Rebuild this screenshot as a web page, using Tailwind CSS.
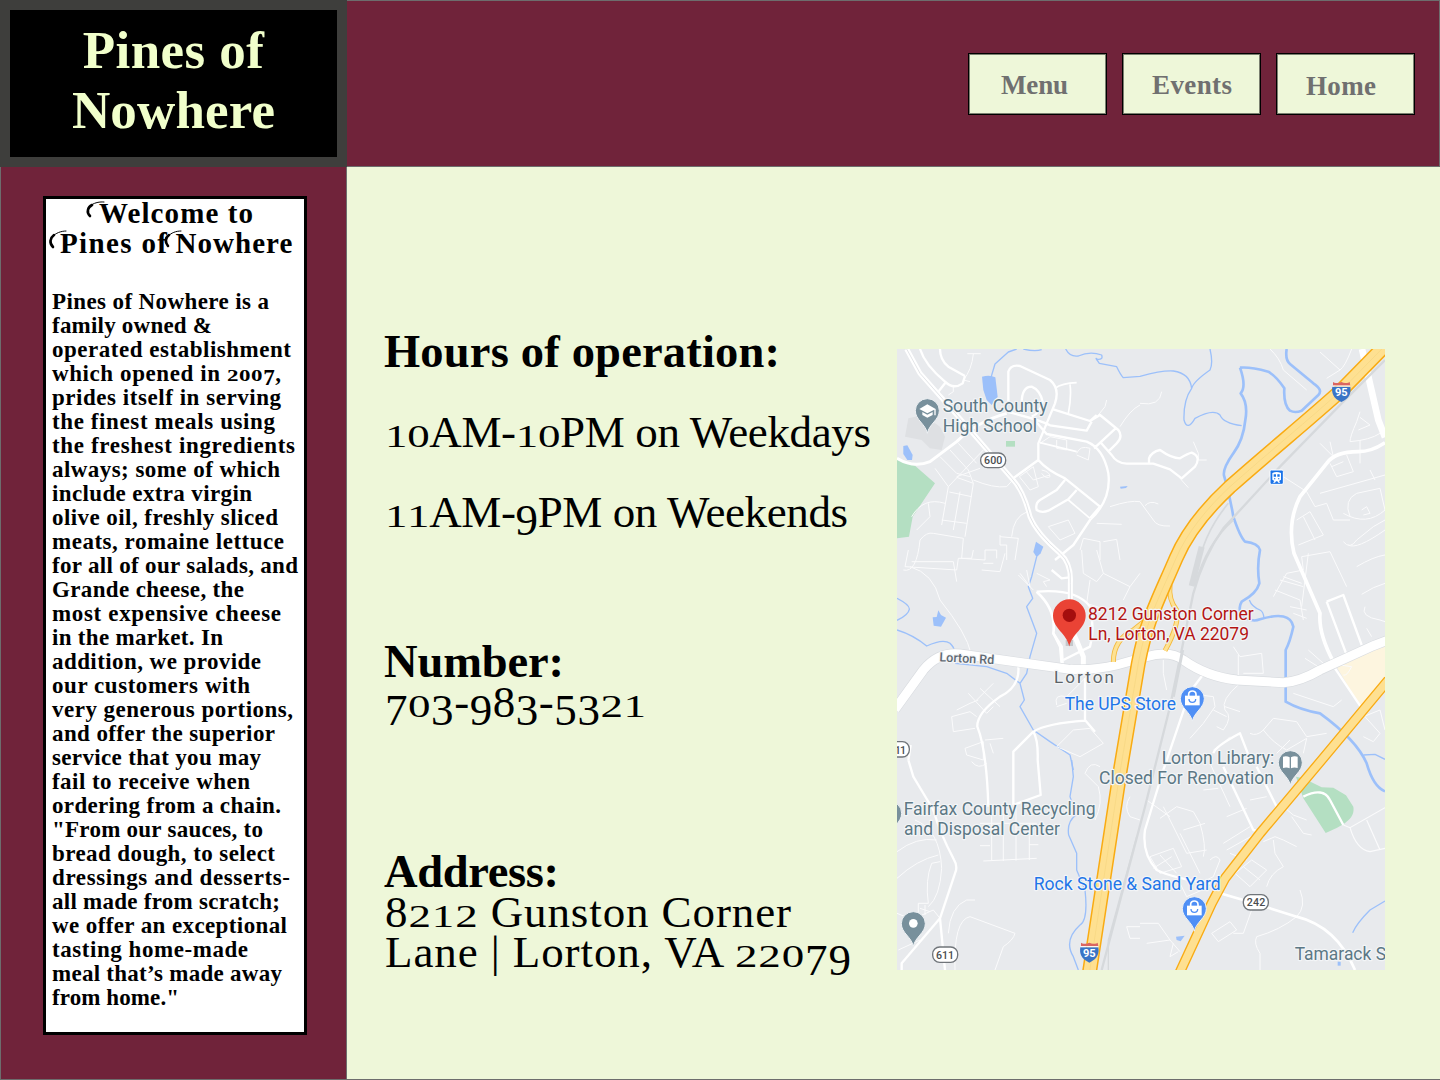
<!DOCTYPE html>
<html lang="en">
<head>
<meta charset="utf-8">
<title>Pines of Nowhere</title>
<script src="https://cdn.jsdelivr.net/npm/@tailwindcss/browser@4"></script>
</head>
<body class="w-[1440px] h-[1080px] overflow-hidden bg-[#eef7d9] font-['Liberation_Serif',serif] text-black flex flex-col">
<header class="flex h-[167px] shrink-0">
  <div class="w-[347px] h-[167px] shrink-0 border-10 border-[#3e3e3c] bg-black text-[#f1ffcb] text-[53px] leading-[60px] font-bold pt-[10px] text-center">
    <h1><span data-w="181">Pines of</span><br><span data-w="203">Nowhere</span></h1>
  </div>
  <nav class="flex-1 border border-l-0 border-[#6d6d6d] bg-[#70233a] flex justify-end gap-[15px] pt-[52px] pr-6 text-[27px] leading-[30px] font-bold text-[#707070]">
    <a class="w-[139px] h-[62px] border border-black bg-[#eef7d9] pl-8 pt-4 shadow-[inset_0_0_0_1px_#7b8070]"><span data-w="67">Menu</span></a>
    <a class="w-[139px] h-[62px] border border-black bg-[#eef7d9] pl-[29px] pt-4 shadow-[inset_0_0_0_1px_#7b8070]"><span data-w="80">Events</span></a>
    <a class="w-[139px] h-[62px] border border-black bg-[#eef7d9] pl-[29px] pt-[17px] shadow-[inset_0_0_0_1px_#7b8070]"><span data-w="70">Home</span></a>
  </nav>
</header>
<div class="flex flex-1">
  <aside class="w-[347px] shrink-0 border border-t-0 border-[#6d6d6d] bg-[#70233a] pl-[42px] pt-[28.5px]">
    <section class="w-[264px] h-[839px] border-3 border-black bg-white">
      <h2 class="relative h-[92px] text-[29px] leading-[30px] font-bold">
        <svg class="absolute left-0 top-0 w-[258px] h-[60px]" viewBox="46 199 258 60" fill="none" stroke="#000" stroke-linecap="round">
          <g stroke-width="1"><path d="M90 217C84 210 92 202 104 203"/><path d="M53 248C46 241 55 232 66 232"/><path d="M168 247C163 240 170 232 181 232"/></g>
          <g stroke-width="2.6"><path d="M90 217C86 213 88 208 92 206"/><path d="M53 248C49 244 50 239 54 236"/><path d="M168 247C165 243 165 239 169 236"/></g>
        </svg>
        <div class="-mt-px pl-[53px]"><span data-w="154">Welcome to</span></div>
        <div class="pl-[14px] flex"><span data-w="107">Pines of</span><span class="ml-[7px]" data-w="117">Nowhere</span></div>
      </h2>
      <div id="story" class="pl-[6px] text-[23px] leading-6 font-bold"></div>
    </section>
  </aside>
  <main class="flex-1 flex border-b border-[#6d6d6d]">
    <div class="w-[550px] shrink-0 pl-[38px] pt-[165px] text-[45px] leading-[40px]">
      <section class="h-[310px] flex flex-col gap-10">
        <h3 class="-ml-px text-[46.5px] font-bold"><span data-w="396">Hours of operation:</span></h3>
        <p><span data-old data-w="486">10AM-10PM on Weekdays</span></p>
        <p><span data-old data-w="463">11AM-9PM on Weekends</span></p>
      </section>
      <section class="h-[210px]">
        <h3 class="-ml-px text-[46.5px] font-bold"><span data-w="180">Number:</span></h3>
        <p><span data-old data-w="261">703-983-5321</span></p>
      </section>
      <section>
        <h3 class="-ml-px text-[46.5px] font-bold"><span data-w="175">Address:</span></h3>
        <p><span data-old data-w="406">8212 Gunston Corner</span></p>
        <p><span data-old data-w="466">Lane | Lorton, VA 22079</span></p>
      </section>
    </div>
    <svg class="w-[488px] h-[621px] mt-[182px] shrink-0" viewBox="21 27 1464 1863" font-family="Roboto, sans-serif">
      <defs>
        <path id="pin" d="M0 68C-5 40-36 28-36 0A36 36 0 0 1 36 0C36 28 5 40 0 68Z"/>
        <g id="bag"><path d="M-22-9H22V20H-22Z" fill="#fff"/><path d="M-11-8V-13A11 10 0 0 1 11-13V-8" fill="none" stroke="#fff" stroke-width="5"/><path d="M-10 1A10 10 0 0 0 10 1" fill="none" stroke="#4f8ff5" stroke-width="4"/></g>
        <g id="interstate"><path d="M-27-14H27C30 5 25 20 0 32C-25 20-30 5-27-14Z" fill="#3974c6"/><path d="M-25-18V-28Q-20-24-14-25Q-8-24 0-28Q8-24 14-25Q20-24 25-28L27-17H-27Z" fill="#db6660"/><path d="M-27-16H27" stroke="#fff" stroke-width="3"/><text y="15" text-anchor="middle" font-size="33" font-weight="700" fill="#fff">95</text></g>
      </defs>
      <rect x="21" y="27" width="1464" height="1863" fill="#e8eaed"/>
      <!-- parks and built-up areas -->
      <g fill="#b4dfc2">
        <path d="M21 358L75 377L135 430L68 530L57 590L21 595Z"/>
        <path d="M348 303H375V320H348Z"/>
        <path d="M1218 1310L1240 1315L1295 1342L1330 1343L1368 1366L1390 1400C1395 1430 1375 1450 1307 1479L1240 1375Z"/>
      </g>
      <path d="M1340 980L1485 915V1010L1410 1100Z" fill="#fdf5df"/>
      <path d="M55 235L100 225L150 260L165 290L155 330L120 325L95 300L45 290Z" fill="#dee0e3"/>
      <!-- water -->
      <g fill="#9cc0fa">
        <path d="M276 110Q300 104 316 112L323 170L305 195L290 180L280 150Z"/>
        <path d="M40 318L52 316L68 345L66 360L52 360L40 342Z"/>
        <path d="M438 605L460 620L452 640L440 652L430 636Z"/>
        <path d="M145 811L153 825L168 833L153 860L131 857L128 832L140 831Z"/>
        <path d="M690 440L713 438L708 444L692 446Z"/>
        <path d="M858 1790L884 1787L872 1804L860 1800Z"/>
        <path d="M1343 1865H1352V1877H1343Z"/>
      </g>
      <g fill="none" stroke="#9cc0fa" stroke-width="4" stroke-linejoin="round">
        <path d="M303 112L315 72L355 36L380 27M400 27Q435 36 455 29M527 27Q540 52 565 48Q600 32 635 45Q640 60 622 58Q612 48 628 70L680 80Q692 105 700 113L750 109Q820 90 850 93Q900 100 905 145M960 27Q970 70 960 90Q910 125 905 145Q880 180 882 240Q892 275 915 235Q970 205 990 225Q1000 250 1055 257"/>
        <path d="M440 650L425 710L415 740L428 775L410 800L440 880L420 950L410 1000L390 1030L350 1000L290 980L195 970M390 1030L403 1080L390 1100L430 1170L480 1205L540 1245L550 1290"/>
        <path d="M21 775Q60 795 58 808Q55 825 21 841M21 870Q70 885 110 918Q160 895 180 910Q195 925 192 935"/>
        <path d="M545 1260L550 1310L540 1370L558 1425Q530 1445 536 1485L560 1540L560 1590L585 1650Q595 1740 570 1755Q520 1800 550 1850L565 1890"/>
        <path d="M1485 1683L1440 1710Q1400 1750 1388 1778M1420 1245L1455 1243L1485 1258M1078 780Q1085 800 1110 810Q1120 815 1122 834"/>
      </g>
      <g fill="none" stroke="#9cc0fa" stroke-width="8" stroke-linejoin="round">
        <path d="M1190 27Q1185 60 1200 72L1270 130Q1300 150 1285 165L1235 212Q1215 220 1200 212Q1180 195 1183 145Q1160 110 1135 95Q1080 80 1050 83"/>
        <path d="M1050 83Q1070 140 1052 160Q1075 190 1066 240Q1060 300 1030 340Q995 390 1003 410Q1020 470 1030 530Q1050 590 1065 605Q1105 610 1110 630Q1100 680 1108 730Q1100 760 1055 785Q1045 800 1052 820Q1080 850 1110 838Q1200 810 1210 860Q1200 905 1187 930V1085Q1230 1110 1290 1120Q1400 1200 1430 1270Q1450 1340 1485 1354"/>
      </g>
      <!-- local streets -->
      <g fill="none" stroke="#fbfbfc" stroke-width="3" stroke-linejoin="round">
        <path d="M232 41H272M250 42Q245 90 220 120L240 125M175 165L190 155V140M135 385L175 440L280 330M150 350L200 400L240 410M180 330L235 390L250 430L200 412M205 310L260 370M175 440L155 555M210 455L190 570M178 456L245 470M250 430L225 590M155 540L230 550M200 410L270 385M250 420Q310 445 350 440L370 418M90 600Q80 700 40 690M65 530Q100 470 165 490M115 490L120 530L80 570M90 600Q110 575 130 580L220 595L215 655L285 660V630H320V655M330 585V615H350V660M330 590L385 595L375 660M365 590Q370 530 412 515"/>
        <path d="M388 410L430 380L445 440L420 450ZM405 390L430 420L480 405M450 310L480 290L530 300V330L500 325V300M560 340Q570 315 600 325L595 360L560 345M620 550L695 553M660 500Q720 480 750 485M475 560L535 540L555 580L510 600ZM570 630L580 595L630 605V660M640 605L680 598L690 660M455 390Q480 395 480 410Q470 420 455 400M650 180L645 200L625 225M690 260Q720 210 750 195"/>
        <path d="M750 190Q810 200 815 155M750 485L790 540Q800 560 840 558M765 497Q780 480 805 492M1140 27Q1170 55 1180 90L1250 150M1290 36L1350 90L1310 115M1385 27Q1365 80 1350 90M1180 410L1250 455M910 305L925 340V360H950M870 415L895 443"/>
        <path d="M1410 215L1400 245Q1380 290 1380 305Q1440 300 1470 280M1410 232L1440 255L1405 270M1410 300V370M1290 310L1330 350L1320 305M1320 370L1340 410L1390 395L1370 345M1325 380L1360 365M1290 460L1485 405M1440 390L1455 420M1250 455L1275 500L1310 490L1330 540H1380M1380 530Q1360 480 1400 460L1470 445L1485 510Q1430 560 1360 520M1415 510L1430 500L1440 520L1420 525M1220 540L1260 515L1300 585L1225 615M1240 530L1275 600M1360 605Q1380 630 1400 600L1450 560L1485 540M1375 615Q1400 630 1485 570"/>
        <path d="M55 630L45 680L200 690L205 655H245L250 630M65 665H190L200 725M275 690L330 695L345 640M280 670H310M60 680Q130 700 150 780Q230 880 243 940M185 1130L240 1115L260 1130M185 1130L190 1175L255 1165M200 1110L240 1090L265 1080M225 1225L280 1205V1260L230 1245ZM235 1060L290 1120L310 1100M270 1045L330 1100M260 1080L310 1030M285 1200L340 1195M300 1210L310 1240M390 700L420 740L410 690M385 705L430 750M440 700L480 720L460 725L470 740"/>
        <path d="M500 1095Q490 1060 530 1070L590 1010M500 1100L530 1090M500 1220L550 1170L600 1165L640 1210L570 1250Z"/>
        <path d="M575 630L580 700L620 725L640 700L720 740L750 700M600 720L590 790L650 810M620 630L640 700M720 740L700 780"/>
        <path d="M1150 770L1190 700L1240 690L1235 650L1320 635L1370 740M1155 750L1230 780L1240 840M1170 720L1240 740M1180 710L1235 730M1200 800L1250 810M1210 820L1250 835M1255 640L1235 800M1400 680Q1450 650 1485 645M1415 763Q1450 740 1485 730M1425 800Q1410 830 1470 840L1485 845M1430 865L1445 890M1030 920L1050 950L1115 940L1120 1000L1060 1000M1045 945V1010M1050 1030Q990 1080 1005 1110Q1030 1130 1000 1170L980 1160M1005 1100L1050 1115M1210 1060L1330 1100L1355 1080M1245 955L1300 990M1255 930L1300 970M890 1060L970 1070L975 1100L940 1150L900 1195M820 960V1000L830 1050M1350 975L1385 980Q1370 1010 1360 1005"/>
        <path d="M970 1110L1010 1130M970 1230L1000 1210L1020 1190M1080 1180Q1100 1190 1120 1170L1150 1135L1220 1145L1250 1190L1310 1180M1120 1170Q1150 1210 1190 1230L1250 1195L1240 1240M1160 1240L1200 1200M1420 1130L1470 1110L1485 1170M1425 1130L1470 1180L1450 1205L1420 1190"/>
        <path d="M245 1265Q265 1290 290 1270M21 1535Q80 1490 140 1500M21 1615Q80 1560 145 1545M75 1440Q150 1470 155 1585Q150 1670 115 1700M150 1565L125 1570Q105 1620 115 1690H85V1730L130 1710L150 1735M105 1695V1725M90 1705L120 1715M270 1450H440M280 1563L440 1555M305 1400V1560M340 1400V1563M378 1400V1562M418 1450V1560M270 1517H300M418 1514H445M255 1680H230Q180 1700 175 1780M195 1890Q190 1740 240 1730L375 1780Q370 1800 340 1820L315 1890M21 1720L70 1740M25 1830L90 1800"/>
        <path d="M585 1300Q600 1260 630 1280M585 1300L625 1340Q640 1390 615 1440M720 1370Q700 1400 720 1430L750 1440M750 1760H710L720 1795H750"/>
        <path d="M810 1435L860 1400L910 1415L930 1450Q950 1520 940 1550M880 1470L945 1450M820 1400L890 1540L950 1530M870 1480L930 1600M770 1380L840 1430M780 1550L850 1525L875 1580L810 1600ZM810 1545L860 1600M790 1585L845 1550M1000 1510L1080 1460M1010 1530L1100 1480M1020 1540L1070 1560M1035 1600L1085 1560L1130 1590L1080 1640ZM1060 1580L1110 1620M1120 1505L1155 1490L1180 1500L1220 1520M1150 1500L1155 1540L1180 1580Q1140 1600 1130 1640M960 1560Q980 1540 990 1560L970 1610L930 1630M870 1630L890 1670L960 1640M965 1780L1020 1745L1040 1770L985 1805ZM1030 1780L1060 1780L1085 1710M1230 1650Q1250 1700 1220 1730Q1170 1770 1100 1790Q1090 1810 1110 1840V1890M750 1750H805L840 1800L770 1810M840 1800L870 1835M850 1810L840 1850L865 1835M1205 1430L1240 1480L1265 1485M1180 1400L1210 1425L1250 1440M960 1270L1020 1400M940 1350L985 1345M1010 1430L1070 1405M1080 1380L1130 1370"/>
      </g>
      <g fill="none" stroke="#fff" stroke-width="7" stroke-linejoin="round">
        <path d="M90 27Q105 75 165 125Q190 150 218 130L225 108M150 27Q150 60 175 80L225 108M145 155L165 130"/>
        <path d="M355 190V95Q362 73 390 78L480 120Q510 145 495 190L445 310V360L365 418M395 190Q395 140 425 140Q450 150 458 185Q450 220 425 230M490 208L600 243L630 225L685 270Q700 290 680 310L655 335M600 243L620 225M350 215Q450 240 480 256L590 272L605 245M425 230L470 282L590 305Q640 325 655 400Q665 480 600 540L550 615L495 660M630 305L665 345Q680 370 710 371H790L840 388L875 415L915 380Q935 350 905 338Q895 340 870 355Q845 355 810 330Q785 335 777 355V370M680 262L612 325M445 360Q470 390 525 415L630 500L600 535M525 420L500 450L450 480Q435 490 440 510Q455 520 475 512L535 478L560 450"/>
        <path d="M495 145Q515 130 560 128M540 133Q545 170 535 220M450 308L560 335M535 480L600 535" stroke-width="5"/>
        <path d="M385 980Q390 1040 330 1070Q260 1120 262 1160Q290 1230 295 1400M430 1175Q470 1150 585 1142L585 1015M430 1175L370 1235V1395M430 1175Q445 1200 443 1260L452 1365L370 1395M585 1140L615 1175M440 755Q560 745 600 800Q615 870 600 920L520 960M515 975L510 920L490 880M485 690L515 715L538 712"/>
        <path d="M1310 785L1360 765L1415 915M1310 785L1370 945M1335 985L1412 1100M970 1240Q975 1220 1050 1180L1085 1270M1000 1280L1090 1470L1110 1475L1160 1400L1100 1280"/>
        <path d="M940 1003L900 1055L820 1290L765 1470Q755 1540 800 1590Q850 1615 960 1630M1100 1480L1240 1310M1240 1370Q1300 1340 1320 1380L1360 1455"/>
      </g>
      <path d="M1360 1455L1380 1463L1485 1403M1380 1463Q1400 1530 1440 1535L1485 1525M1430 1440L1470 1530" fill="none" stroke="#fbfbfc" stroke-width="3.5"/>
      <g fill="none" stroke="#fff" stroke-width="11" stroke-linejoin="round">
        <path d="M21 355Q70 385 120 365L200 305Q260 245 350 220" stroke-width="9"/>
        <path d="M1485 308Q1445 335 1405 335Q1335 335 1310 370L1230 470Q1190 550 1212 640L1290 820Q1285 880 1330 965"/>
        <path d="M55 1260L70 1310L130 1410Q150 1480 190 1555Q205 1580 195 1600L150 1735L165 1890M150 1735L35 1870V1890M55 1260L62 1215" stroke-width="7"/>
        <path d="M440 755Q500 810 490 880L515 920L518 980M990 1660L1060 1680L1220 1730Q1340 1760 1395 1890" stroke-width="8"/>
      </g>
      <!-- arterial road with its centre line -->
      <path d="M50 27L90 100L240 270L365 415Q400 450 420 530Q440 580 510 640Q545 670 541 730V860Q560 900 580 950V990" fill="none" stroke="#fff" stroke-width="15"/>
      <path d="M50 27L90 100L240 270L365 415Q400 450 420 530Q440 580 510 640Q545 670 541 730V820" fill="none" stroke="#e3e5e8" stroke-width="3"/>
      <path d="M1416 27L1465 240L1485 292" fill="none" stroke="#fff" stroke-width="20"/>
      <!-- railway -->
      <g fill="none" stroke="#d6d9dc" stroke-width="7">
        <path d="M1485 60L1355 190L1170 380L1000 565Q940 650 910 760L840 1100L765 1400L635 1890"/>
        <path d="M1015 490Q940 580 922 690M1030 540Q950 610 915 735" stroke-width="5"/>
        <path d="M740 1490L655 1800V1890" stroke-width="4"/>
        <path d="M935 620L905 738" stroke-width="18"/>
      </g>
      <path d="M15 1108L100 990Q145 935 210 942L380 966L540 988Q610 992 680 975L770 950Q840 930 880 960Q950 1010 1040 1020L1180 1028Q1230 1025 1290 990L1450 917L1495 900" fill="none" stroke="#d9dce0" stroke-width="31"/>
      <path d="M15 1108L100 990Q145 935 210 942L380 966L540 988Q610 992 680 975L770 950Q840 930 880 960Q950 1010 1040 1020L1180 1028Q1230 1025 1290 990L1450 917L1495 900" fill="none" stroke="#fff" stroke-width="27"/>
      <path d="M878 930L850 1070" stroke="#d6d9dc" stroke-width="9"/>
      <!-- highways -->
      <g fill="none">
        <path d="M670 966Q670 900 730 870L780 830M840 735Q835 780 860 810Q870 850 825 932" stroke="#f5b93c" stroke-width="15"/>
        <path d="M670 966Q670 900 730 870L780 830M840 735Q835 780 860 810Q870 850 825 932" stroke="#fde293" stroke-width="10"/>
        <path d="M1490 12L1355 150C1250 245 1150 325 1020 440C950 505 890 580 858 655C800 790 770 840 745 970L691 1290L598 1900" stroke="#f9ab13" stroke-width="45"/>
        <path d="M1490 12L1355 150C1250 245 1150 325 1020 440C950 505 890 580 858 655C800 790 770 840 745 970L691 1290L598 1900" stroke="#fee091" stroke-width="36"/>
        <path d="M1490 12L1355 150C1250 245 1150 325 1020 440C950 505 890 580 858 655C800 790 770 840 745 970L691 1290L598 1900" stroke="#f3d37d" stroke-width="1.5"/>
        <path d="M1495 1020L1295 1260L1110 1480L1005 1615L965 1690L868 1900" stroke="#f9ab13" stroke-width="31"/>
        <path d="M1495 1020L1295 1260L1110 1480L1005 1615L965 1690L868 1900" stroke="#fee091" stroke-width="23"/>
      </g>
      <!-- route shields -->
      <use href="#interstate" x="1354" y="154"/><use href="#interstate" x="598" y="1836"/>
      <g fill="#fff" stroke="#70757a" stroke-width="4">
        <rect x="272" y="339" width="75" height="44" rx="21"/><rect x="-20" y="1205" width="78" height="46" rx="21"/>
        <rect x="128" y="1821" width="75" height="46" rx="21"/><rect x="1060" y="1664" width="75" height="46" rx="21"/>
      </g>
      <g font-size="32" font-weight="500" fill="#4a4d50">
        <text x="282" y="372" textLength="55">600</text><text x="14" y="1241" textLength="34">11</text>
        <text x="138" y="1856" textLength="54">611</text><text x="1070" y="1699" textLength="56">242</text>
      </g>
      <!-- place pins -->
      <g stroke="#eef1f4" stroke-width="3">
        <g fill="#78909c"><use href="#pin" x="112" y="212"/><use href="#pin" x="1201" y="1268"/><use href="#pin" x="70" y="1751"/><use href="#pin" x="-1" y="1420"/></g>
        <g fill="#4f8ff5"><use href="#pin" x="907" y="1076"/><use href="#pin" x="913" y="1706"/></g>
      </g>
      <path d="M88 207L112 193L137 207L112 220ZM97 216L112 224L128 216V225L112 233L97 225ZM133 207H137V226H133Z" fill="#fff"/>
      <circle cx="70" cy="1750" r="13" fill="#fff"/>
      <path d="M1179 1250Q1190 1246 1199 1252V1285Q1190 1280 1179 1284ZM1203 1252Q1212 1246 1223 1250V1284Q1212 1280 1203 1285Z" fill="#fff"/>
      <use href="#bag" x="907" y="1076"/><use href="#bag" x="913" y="1706"/>
      <rect x="1140" y="390" width="40" height="43" rx="4" fill="#1a73e8" stroke="#fff" stroke-width="3"/>
      <path d="M1147 399Q1160 393 1173 399V419L1167 423L1171 428H1165L1162 424H1158L1155 428H1149L1153 423L1147 419Z" fill="#fff"/>
      <path d="M1151 403H1158V410H1151ZM1162 403H1169V410H1162ZM1152 415H1156V418H1152ZM1164 415H1168V418H1164Z" fill="#1a73e8"/>
      <rect x="527" y="900" width="22" height="18" fill="#c5c8cb"/>
      <use href="#pin" transform="translate(538 827) scale(1.36)" fill="#ea4335"/><circle cx="538" cy="826" r="20" fill="#a50e0e"/>
      <!-- labels -->
      <g stroke="#f3f5f7" stroke-width="7" stroke-linejoin="round" paint-order="stroke" font-size="53" lengthAdjust="spacingAndGlyphs">
        <g fill="#5c7885">
          <text x="158" y="216" textLength="315" lengthAdjust="spacingAndGlyphs">South County</text><text x="158" y="276" textLength="283" lengthAdjust="spacingAndGlyphs">High School</text>
          <text x="815" y="1271" textLength="338" lengthAdjust="spacingAndGlyphs">Lorton Library:</text><text x="627" y="1332" textLength="525" lengthAdjust="spacingAndGlyphs">Closed For Renovation</text>
          <text x="41" y="1426" textLength="576" lengthAdjust="spacingAndGlyphs">Fairfax County Recycling</text><text x="42" y="1485" textLength="468" lengthAdjust="spacingAndGlyphs">and Disposal Center</text>
          <text x="1214" y="1860" textLength="274" lengthAdjust="spacingAndGlyphs">Tamarack S</text>
        </g>
        <g fill="#1f76e8"><text x="524" y="1109" textLength="334" lengthAdjust="spacingAndGlyphs">The UPS Store</text><text x="431" y="1649" textLength="561" lengthAdjust="spacingAndGlyphs">Rock Stone &amp; Sand Yard</text></g>
        <g fill="#b31412"><text x="594" y="839" textLength="497" lengthAdjust="spacingAndGlyphs">8212 Gunston Corner</text><text x="595" y="899" textLength="482" lengthAdjust="spacingAndGlyphs">Ln, Lorton, VA 22079</text></g>
        <text x="492" y="1029" textLength="180" fill="#5b6368" font-size="51">Lorton</text>
        <text x="148" y="964" textLength="164" font-size="38" fill="#5f6972" font-weight="500" lengthAdjust="spacingAndGlyphs" transform="rotate(3 148 964)">Lorton Rd</text>
      </g>
    </svg>
  </main>
</div>
<script>
// Each story line with its set width in pixels.
const story = [
  ["Pines of Nowhere is a",217],["family owned &",160],["operated establishment",239],["which opened in 2007,",229],
  ["prides itself in serving",229],["the finest meals using",223],["the freshest ingredients",243],["always; some of which",228],
  ["include extra virgin",200],["olive oil, freshly sliced",226],["meats, romaine lettuce",232],["for all of our salads, and",246],
  ["Grande cheese, the",192],["most expensive cheese",229],["in the market. In",171],["addition, we provide",209],
  ["our customers with",198],["very generous portions,",241],["and offer the superior",223],["service that you may",209],
  ["fail to receive when",198],["ordering from a chain.",229],['"From our sauces, to',211],["bread dough, to select",223],
  ["dressings and desserts-",238],["all made from scratch;",228],["we offer an exceptional",235],["tasting home-made",196],
  ["meal that’s made away",230],['from home."',127]
];
const box = document.getElementById("story");
for (const [text, width] of story) {
  const line = document.createElement("p");
  const run = document.createElement("span");
  run.textContent = text;
  run.dataset.w = width;
  run.dataset.old = "";
  line.append(run);
  box.append(line);
}
// Old-style figures: 0 1 2 sit at x-height, 3 4 5 7 9 descend.
const low = "not-italic inline-block leading-[0] origin-[0_.3375em] scale-y-[.72]";
const drop = "not-italic inline-block leading-[0] translate-y-[.18em]";
for (const el of document.querySelectorAll("[data-old]")) {
  el.innerHTML = el.innerHTML.replace(/\d/g, d =>
    "012".includes(d) ? `<i class="${low}">${d}</i>` :
    "34579".includes(d) ? `<i class="${drop}">${d}</i>` : d);
}
// Track every run to its set width, again whenever its natural size changes.
function fit(el) {
  el.style.letterSpacing = "0px";
  const natural = el.getBoundingClientRect().width;
  const n = el.textContent.length;
  el.style.letterSpacing = ((el.dataset.w - natural) / (n - 1)).toFixed(3) + "px";
}
const runs = [...document.querySelectorAll("[data-w]")];
const watcher = new ResizeObserver(entries => entries.forEach(e => fit(e.target)));
for (const el of runs) {
  el.classList.add("inline-block", "whitespace-nowrap");
  watcher.observe(el);
}
addEventListener("load", () => runs.forEach(fit));
</script>
</body>
</html>
